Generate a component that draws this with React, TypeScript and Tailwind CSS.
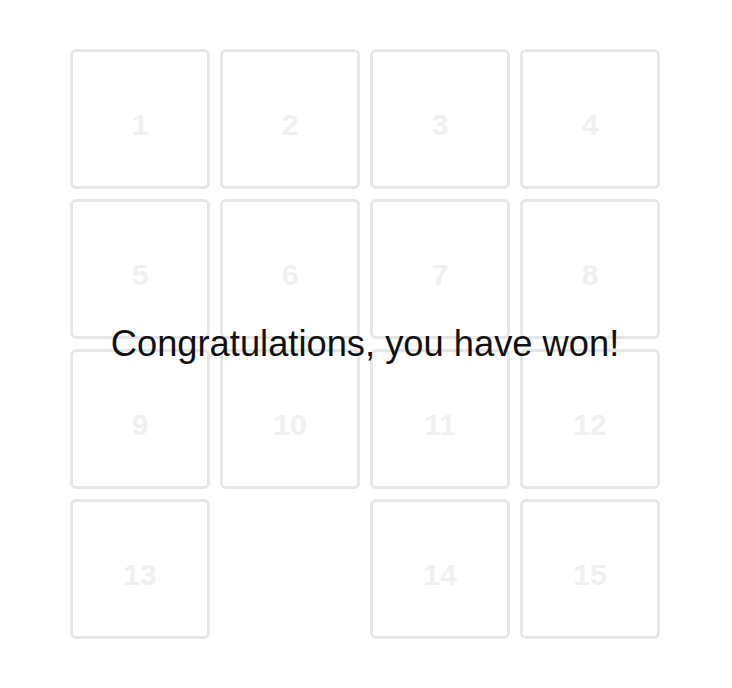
import React from "react";

const cells: (number | null)[] = [1, 2, 3, 4, 5, 6, 7, 8, 9, 10, 11, 12, 13, null, 14, 15];

export default function App() {
  return (
    <div
      className="w-[732px] h-[688px] bg-white"
      style={{ fontFamily: '"Liberation Sans", Arial, Helvetica, sans-serif' }}
    >
      <div className="pt-[49px] pl-[70px]">
        <div className="relative w-[590px]">
          <div className="grid grid-cols-[repeat(4,140px)] grid-rows-[repeat(4,140px)] gap-[10px]">
            {cells.map((n, i) =>
              n === null ? (
                <div key={i} />
              ) : (
                <div
                  key={i}
                  className="flex items-center justify-center rounded-[6px] border-[3px] border-[#e6e6e6] bg-white"
                >
                  <span className="relative top-[6px] text-[30px] font-bold leading-none text-[#efefef]">
                    {n}
                  </span>
                </div>
              )
            )}
          </div>
          <div className="absolute inset-0 flex items-center justify-center">
            <span className="text-[36.3px] text-[#111111] whitespace-nowrap">
              Congratulations, you have won!
            </span>
          </div>
        </div>
      </div>
    </div>
  );
}
